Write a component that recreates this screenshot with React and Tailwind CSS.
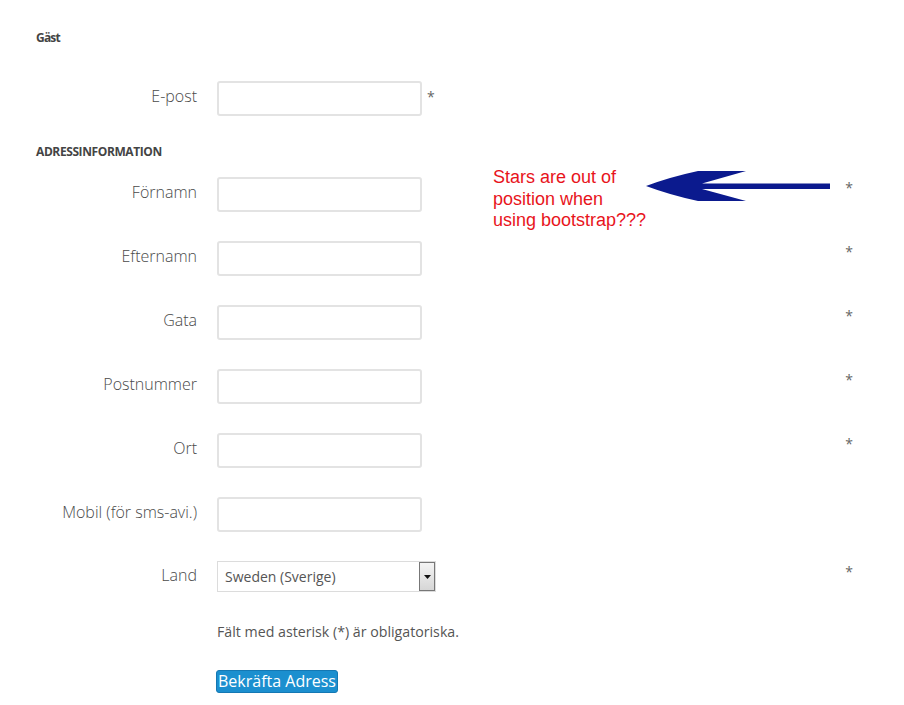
import React from "react";

const font = { fontFamily: '"Open Sans", "DejaVu Sans", sans-serif' };

function Row({ label, children, star, starRight = true }) {
  return (
    <div className="flex items-start h-[35px]">
      <div className="w-[161px] shrink-0 text-right text-[16px] font-light text-[#4a4a4a] leading-[31px]">{label}</div>
      <div className="ml-[20px] shrink-0">{children}</div>
      {star && !starRight && <span className="ml-[5px] mt-[9px] text-[14px] text-[#666] leading-none">*</span>}
      {star && starRight && (
        <div className="flex-1 flex justify-end pr-[51px]">
          <span className="mt-[4px] text-[14px] text-[#666] leading-none">*</span>
        </div>
      )}
    </div>
  );
}

function Input() {
  return <div className="w-[205px] h-[35px] border-2 border-[#e3e3e3] rounded-[3px] bg-white" />;
}

export default function App() {
  return (
    <div className="relative w-[904px] h-[705px] bg-white overflow-hidden" style={font}>
      <div className="pl-[36px] pt-[31px] w-[904px]">
        <div className="text-[12px] font-bold text-[#444] tracking-[-0.8px] leading-[14px]">Gäst</div>
        <div className="mt-[36px]">
          <Row label="E-post" star starRight={false}>
            <Input />
          </Row>
        </div>
        <div className="mt-[29px] text-[12px] font-bold text-[#444] tracking-[-0.4px] leading-[14px]">ADRESSINFORMATION</div>
        <div className="mt-[18px] flex flex-col gap-[29px]">
          <Row label="Förnamn" star><Input /></Row>
          <Row label="Efternamn" star><Input /></Row>
          <Row label="Gata" star><Input /></Row>
          <Row label="Postnummer" star><Input /></Row>
          <Row label="Ort" star><Input /></Row>
          <Row label="Mobil (för sms-avi.)"><Input /></Row>
          <div className="flex items-start h-[31px]">
            <div className="w-[161px] shrink-0 text-right text-[16px] font-light text-[#4a4a4a] leading-[29px]">Land</div>
            <div className="ml-[20px] shrink-0 w-[219px] h-[31px] border border-[#dcdcdc] bg-white flex items-stretch">
              <div className="flex-1 pl-[7px] text-[14px] text-[#555] leading-[29px]">Sweden (Sverige)</div>
              <div className="w-[16px] border border-[#777] bg-gradient-to-b from-[#f4f4f4] to-[#d6d6d6] flex items-center justify-center">
                <svg width="7" height="4" viewBox="0 0 7 4"><path d="M0 0h7L3.5 4z" fill="#111" /></svg>
              </div>
            </div>
            <div className="flex-1 flex justify-end pr-[51px]">
              <span className="mt-[4px] text-[14px] text-[#666] leading-none">*</span>
            </div>
          </div>
        </div>
        <div className="ml-[181px] mt-[30px] text-[14.2px] text-[#555] leading-[20px]">Fält med asterisk (*) är obligatoriska.</div>
        <div className="ml-[180px] mt-[27px]">
          <button className="h-[23px] px-[1px] bg-[#1b8fcf] border border-[#1478b3] rounded-[3px] text-white text-[16px] leading-[20px]" style={font}>Bekräfta Adress</button>
        </div>
      </div>

      {/* annotation overlay */}
      <div className="absolute left-[493px] top-[167px] text-[18px] leading-[21.5px] text-[#e8141c]" style={{ fontFamily: '"Liberation Sans", Arial, sans-serif' }}>
        Stars are out of<br />position when<br />using bootstrap???
      </div>
      <svg className="absolute left-[640px] top-[165px]" width="195" height="42" viewBox="0 0 195 42">
        <path d="M6 21 Q30 12 58 6 L106 6 L62 18.5 L190 18.5 L190 24 L62 24 L106 36 L58 36 Q30 30 6 21 Z" fill="#0b1a8e" />
      </svg>
    </div>
  );
}
